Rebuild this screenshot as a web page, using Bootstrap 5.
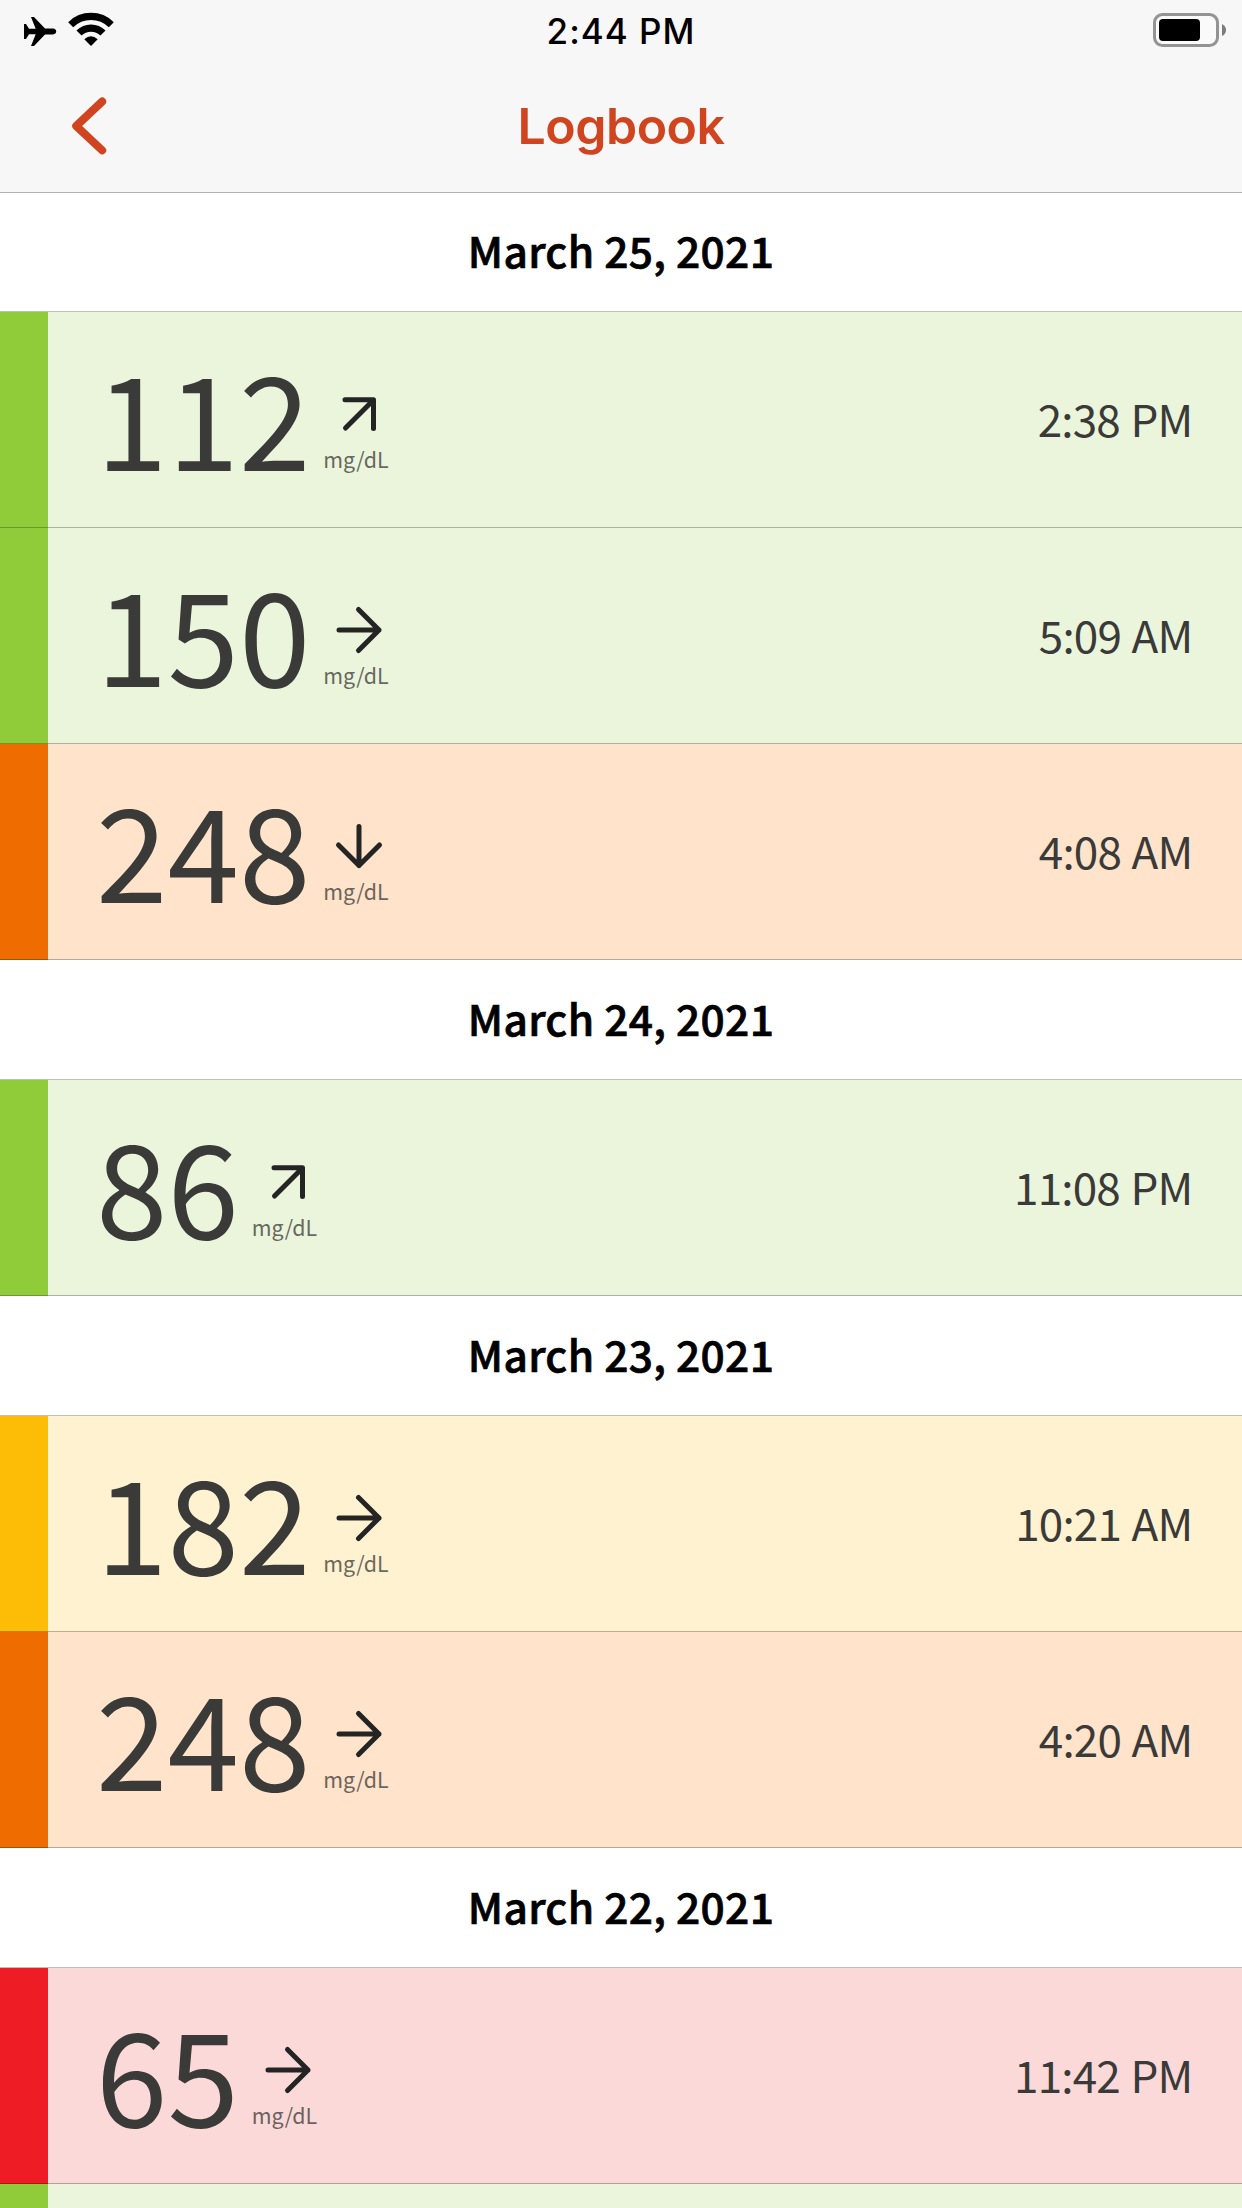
<!DOCTYPE html>
<html lang="en">
<head>
<meta charset="utf-8">
<meta name="viewport" content="width=device-width, initial-scale=1">
<title>Logbook</title>
<link rel="stylesheet" href="https://cdn.jsdelivr.net/npm/bootstrap@5.3.0/dist/css/bootstrap.min.css">
<style>
  body { font-family: "Noto Sans CJK SC", "Noto Sans", sans-serif; background: #fff; color: #000; }
  svg { display: block; overflow: visible; }
  .top-area { background: #f7f7f7; height: 193px; border-bottom: 1px solid #b2b2b2; font-family: Inter, "Liberation Sans", sans-serif; }
  .status-bar { height: 63px; }
  .status-time { font-size: 35px; font-weight: 500; line-height: 62px; letter-spacing: 1px; }
  .side { flex: 1 1 0; }
  .title-bar { height: 129px; color: #d0451f; }
  .screen-title { font-size: 50px; font-weight: 600; line-height: 127px; letter-spacing: -.5px; }
  .day { height: 120px; border-bottom: 1px solid #bebebe; }
  .day:first-child { height: 119px; }
  .day-label { font-size: 42.5px; font-weight: 500; line-height: 116px; margin: 0; letter-spacing: .3px; -webkit-text-stroke: .7px #000; }
  .day:first-child .day-label { line-height: 114px; }
  .entry { height: 216px; background: var(--tint); }
  .range-bar { width: 48px; background: var(--bar); border-bottom: 1px solid rgba(0,0,0,.27); }
  .reading { padding: 0 49.5px 0 48px; border-bottom: 1px solid rgba(0,0,0,.27); color: #3a3a38; }
  .glucose { font-size: 128.8px; line-height: 206px; height: 206px; }
  .trend { padding: 78px 0 0 12.7px; }
  .trend svg { margin-left: 12px; }
  .unit { font-size: 21.4px; line-height: 41px; opacity: .75; }
  .when { font-size: 44px; line-height: 213px; letter-spacing: -.8px; word-spacing: 1.5px; height: 213px; }
  .in-range { --bar: #90cc3a; --tint: #ebf5dc; }
  .high { --bar: #fdbc05; --tint: #fff2d0; }
  .very-high { --bar: #ee6c00; --tint: #ffe3cb; }
  .low { --bar: #ee1c25; --tint: #fbd9d8; }
  .entry.cut-off { height: 24px; }
  .cut-off > div { border-bottom: 0; }
</style>
</head>
<body>
<svg width="0" height="0" class="position-absolute">
  <defs>
    <g id="right" fill="none" stroke="#242424" stroke-width="5" stroke-linecap="round" stroke-linejoin="round"><path d="M4 24H44M23.5 3.5L44 24L23.5 44.5"/></g>
    <g id="down" fill="none" stroke="#242424" stroke-width="5" stroke-linecap="round" stroke-linejoin="round"><path d="M24 4.500V43.500M3.500 23L24 43.500L44.500 23"/></g>
    <g id="rise" fill="none" stroke="#242424" stroke-width="5" stroke-linecap="round" stroke-linejoin="round"><path d="M10.500 38L38.500 10M10 9.700H38.500V38.500"/></g>
  </defs>
</svg>
<header class="top-area">
  <div class="status-bar d-flex">
    <div class="side d-flex">
      <svg width="120" height="63" viewBox="0 0 120 63">
        <path d="M24 24h2l3 4.800H35.700L31 17h3L45 28.600h8q3.200.4 3.200 2.900t-3.200 2.900H45L34 46h-3l4.700-11.800H29L26 39h-2z"/>
        <g fill="none" stroke="#000" stroke-width="7.200"><path d="M70.700 24.700a29 29 0 0 1 40.600 0"/><path d="M79 33a17 17 0 0 1 24 0"/></g>
        <path d="M84.300 39.300q6.700-6.300 13.400 0L91 46z"/>
      </svg>
    </div>
    <div class="status-time">2:44 PM</div>
    <div class="side d-flex justify-content-end">
      <svg width="92" height="63" viewBox="1150 0 92 63">
        <rect x="1154.500" y="14.500" width="63" height="31" rx="8" fill="#fafafa" stroke="#939393" stroke-width="3"/>
        <rect x="1159" y="19" width="41" height="22" rx="4"/>
        <path d="M1222 24q4 2 4 6t-4 6z" fill="#7c7c7c"/>
      </svg>
    </div>
  </div>
  <nav class="title-bar d-flex">
    <div class="side">
      <svg width="120" height="129" viewBox="0 63 120 129" fill="none" stroke="#d0451f" stroke-width="8" stroke-linecap="round" stroke-linejoin="round"><path d="M102.200 101.500L76.200 126L102.200 150.300"/></svg>
    </div>
    <div class="screen-title">Logbook</div>
    <div class="side"></div>
  </nav>
</header>
<main>
  <div class="day text-center"><h2 class="day-label">March 25, 2021</h2></div>
  <div class="entry in-range d-flex">
    <div class="range-bar"></div>
    <div class="reading d-flex flex-grow-1">
      <div class="glucose">112</div>
      <div class="trend d-flex flex-column"><svg width="48" height="48"><use href="#rise"/></svg><div class="unit">mg/dL</div></div>
      <div class="when ms-auto">2:38 PM</div>
    </div>
  </div>
  <div class="entry in-range d-flex">
    <div class="range-bar"></div>
    <div class="reading d-flex flex-grow-1">
      <div class="glucose">150</div>
      <div class="trend d-flex flex-column"><svg width="48" height="48"><use href="#right"/></svg><div class="unit">mg/dL</div></div>
      <div class="when ms-auto">5:09 AM</div>
    </div>
  </div>
  <div class="entry very-high d-flex">
    <div class="range-bar"></div>
    <div class="reading d-flex flex-grow-1">
      <div class="glucose">248</div>
      <div class="trend d-flex flex-column"><svg width="48" height="48"><use href="#down"/></svg><div class="unit">mg/dL</div></div>
      <div class="when ms-auto">4:08 AM</div>
    </div>
  </div>
  <div class="day text-center"><h2 class="day-label">March 24, 2021</h2></div>
  <div class="entry in-range d-flex">
    <div class="range-bar"></div>
    <div class="reading d-flex flex-grow-1">
      <div class="glucose">86</div>
      <div class="trend d-flex flex-column"><svg width="48" height="48"><use href="#rise"/></svg><div class="unit">mg/dL</div></div>
      <div class="when ms-auto">11:08 PM</div>
    </div>
  </div>
  <div class="day text-center"><h2 class="day-label">March 23, 2021</h2></div>
  <div class="entry high d-flex">
    <div class="range-bar"></div>
    <div class="reading d-flex flex-grow-1">
      <div class="glucose">182</div>
      <div class="trend d-flex flex-column"><svg width="48" height="48"><use href="#right"/></svg><div class="unit">mg/dL</div></div>
      <div class="when ms-auto">10:21 AM</div>
    </div>
  </div>
  <div class="entry very-high d-flex">
    <div class="range-bar"></div>
    <div class="reading d-flex flex-grow-1">
      <div class="glucose">248</div>
      <div class="trend d-flex flex-column"><svg width="48" height="48"><use href="#right"/></svg><div class="unit">mg/dL</div></div>
      <div class="when ms-auto">4:20 AM</div>
    </div>
  </div>
  <div class="day text-center"><h2 class="day-label">March 22, 2021</h2></div>
  <div class="entry low d-flex">
    <div class="range-bar"></div>
    <div class="reading d-flex flex-grow-1">
      <div class="glucose">65</div>
      <div class="trend d-flex flex-column"><svg width="48" height="48"><use href="#right"/></svg><div class="unit">mg/dL</div></div>
      <div class="when ms-auto">11:42 PM</div>
    </div>
  </div>
  <div class="entry in-range cut-off d-flex">
    <div class="range-bar"></div>
    <div class="reading flex-grow-1"></div>
  </div>
</main>
<script src="https://cdn.jsdelivr.net/npm/bootstrap@5.3.0/dist/js/bootstrap.bundle.min.js"></script>
</body>
</html>
